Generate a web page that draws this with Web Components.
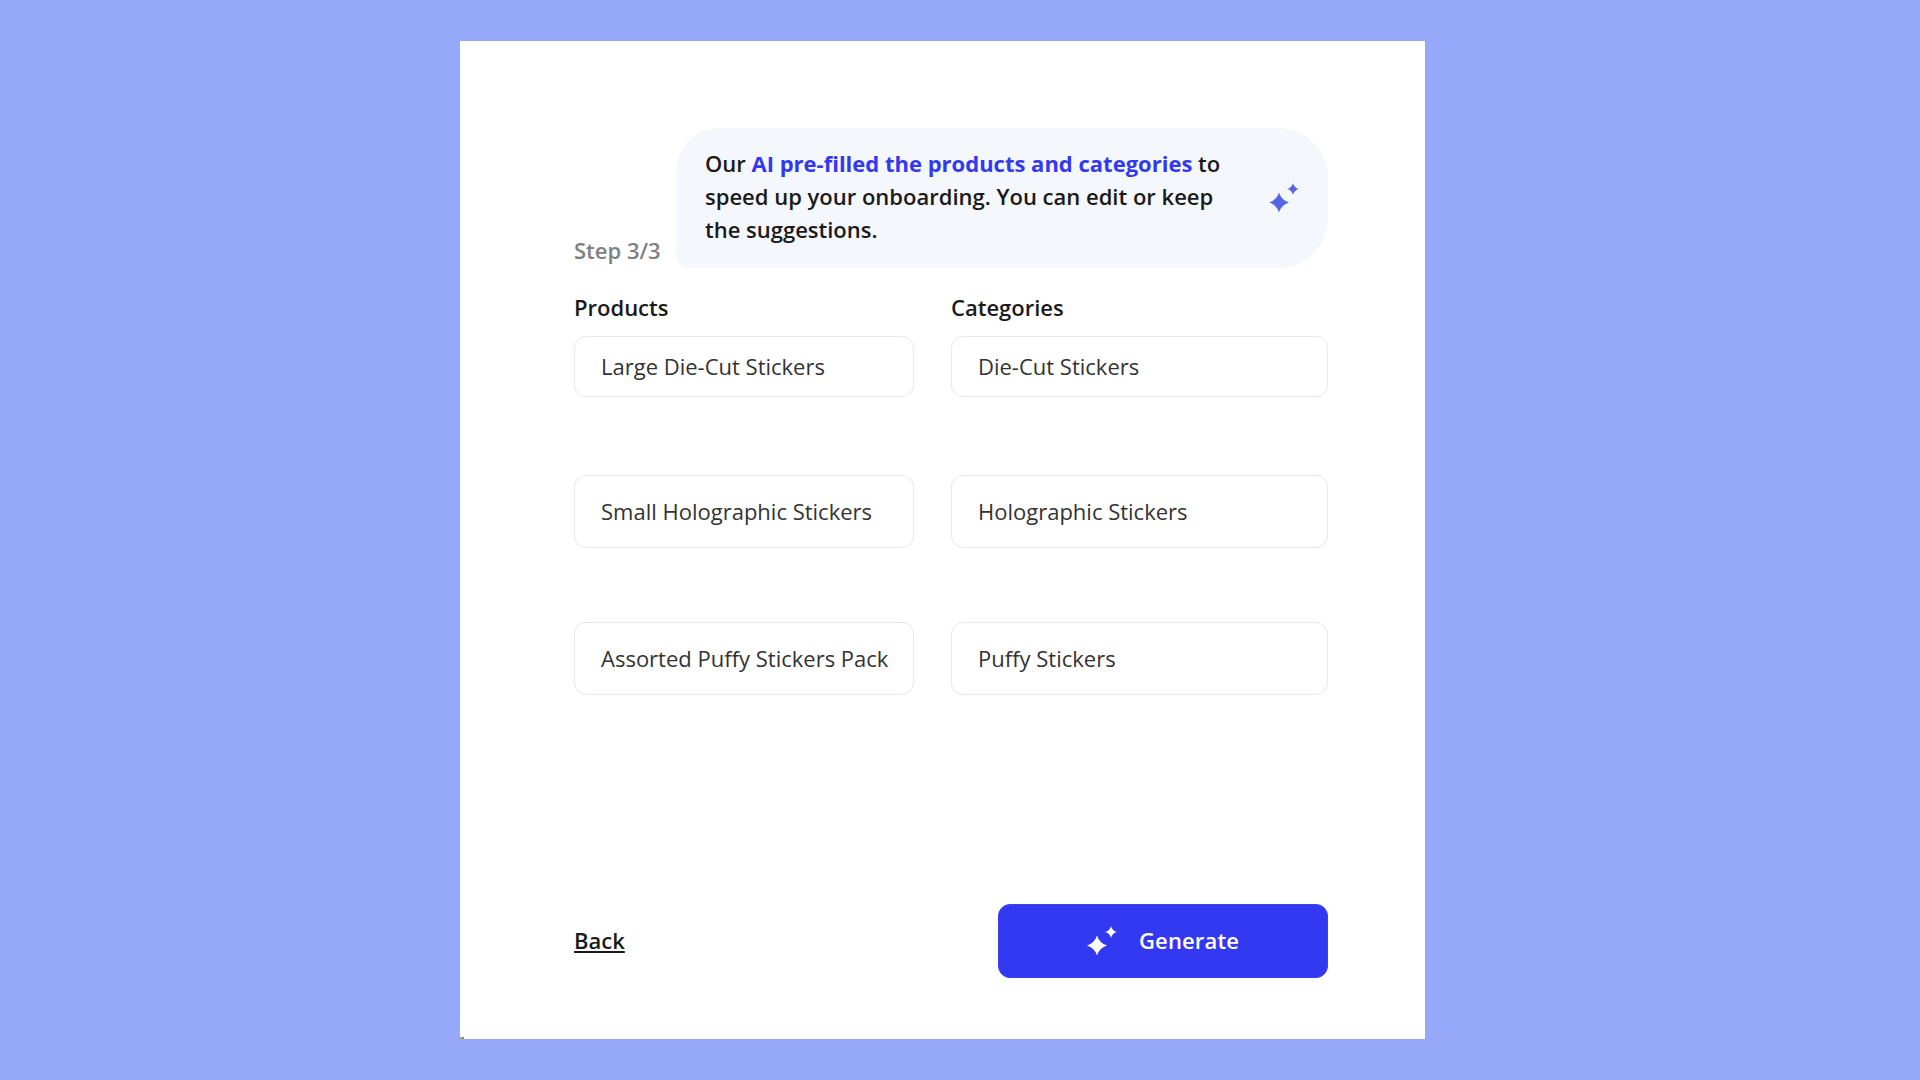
<!DOCTYPE html>
<html>
<head>
<meta charset="utf-8">
<title>Onboarding</title>
<style>
  html, body { margin: 0; height: 100%; }
  body {
    background: #96a8fa;
    font-family: "Open Sans", "Liberation Sans", sans-serif;
    font-size: 22px;
    line-height: 33px;
    color: #111;
  }
</style>
</head>
<body>
<onboard-card>
  <onboard-head step="Step 3/3">
    Our <b>AI pre-filled the products and categories</b> to speed up your onboarding. You can edit or keep the suggestions.
  </onboard-head>
  <field-grid>
    <field-label>Products</field-label>
    <field-label>Categories</field-label>
    <text-field height="61">Large Die-Cut Stickers</text-field>
    <text-field height="61">Die-Cut Stickers</text-field>
    <text-field>Small Holographic Stickers</text-field>
    <text-field>Holographic Stickers</text-field>
    <text-field>Assorted Puffy Stickers Pack</text-field>
    <text-field>Puffy Stickers</text-field>
  </field-grid>
  <onboard-foot></onboard-foot>
</onboard-card>

<script>
// four point star pair, same shape in the bubble and on the button
class SparkIcon extends HTMLElement {
  constructor() {
    super();
    const color = this.getAttribute("color") || "currentColor";
    this.attachShadow({mode: "open"}).innerHTML = `
      <style>
        :host { display: block; width: 32px; height: 32px; flex: none; }
        svg { display: block; }
      </style>
      <svg width="32" height="32" viewBox="0 0 32 32" fill="${color}">
        <path d="M10 12.5 Q12.4 20.1 20 22.5 Q12.4 24.9 10 32.5 Q7.6 24.9 0 22.5 Q7.6 20.1 10 12.5Z"/>
        <path d="M24 3.2 Q25.3 7.7 29.8 9 Q25.3 10.3 24 14.8 Q22.7 10.3 18.2 9 Q22.7 7.7 24 3.2Z"/>
      </svg>`;
  }
}
customElements.define("spark-icon", SparkIcon);

class OnboardCard extends HTMLElement {
  constructor() {
    super();
    this.attachShadow({mode: "open"}).innerHTML = `
      <style>
        :host {
          display: flex;
          flex-direction: column;
          box-sizing: border-box;
          width: 965px;
          height: 998px;
          position: relative;
          top: 41px;
          left: 460px;
          padding: 87px 97px 61px 114px;
          background: #fff;
        }
        /* stray pixels in the corner of the shot */
        :host::after {
          content: "";
          position: absolute;
          left: 0;
          bottom: 0;
          width: 4px;
          height: 2px;
          background: linear-gradient(90deg, #e8a040, #6fb060, #5a80e0);
        }
      </style>
      <slot></slot>`;
  }
}
customElements.define("onboard-card", OnboardCard);

class OnboardHead extends HTMLElement {
  constructor() {
    super();
    const step = this.getAttribute("step");
    this.attachShadow({mode: "open"}).innerHTML = `
      <style>
        :host { display: flex; align-items: flex-end; }
        .step { width: 102px; flex: none; color: #808080; font-weight: 600; margin-bottom: 1px; }
        .bubble {
          flex: 1;
          display: flex;
          align-items: center;
          height: 140px;
          box-sizing: border-box;
          padding: 0 27px 4px 29px;
          background: #f4f7fc;
          border-radius: 44px 50px 50px 12px;
          font-weight: 600;
          color: #1a1a1a;
        }
        .text { width: 520px; }
        spark-icon { margin-left: auto; }
        ::slotted(b) { color: #3339f1; font-weight: 700; }
      </style>
      <div class="step">${step}</div>
      <div class="bubble">
        <div class="text"><slot></slot></div>
        <spark-icon color="#5566e0"></spark-icon>
      </div>`;
  }
}
customElements.define("onboard-head", OnboardHead);

class FieldGrid extends HTMLElement {
  constructor() {
    super();
    this.attachShadow({mode: "open"}).innerHTML = `
      <style>
        :host {
          display: grid;
          grid-template-columns: 340px 377px;
          grid-template-rows: 45px 139px 147px 73px;
          column-gap: 37px;
          margin-top: 23px;
        }
      </style>
      <slot></slot>`;
  }
}
customElements.define("field-grid", FieldGrid);

class FieldLabel extends HTMLElement {
  constructor() {
    super();
    this.attachShadow({mode: "open"}).innerHTML = `
      <style>:host { display: block; font-weight: 600; color: #1a1a1a; }</style>
      <slot></slot>`;
  }
}
customElements.define("field-label", FieldLabel);

class TextField extends HTMLElement {
  constructor() {
    super();
    const h = this.getAttribute("height") || 73;
    this.attachShadow({mode: "open"}).innerHTML = `
      <style>
        :host {
          display: flex;
          align-items: center;
          align-self: start;
          box-sizing: border-box;
          height: ${h}px;
          padding: 0 26px 1px;
          border: 1.5px solid #e8e8e8;
          border-radius: 12px;
          background: #fff;
          color: #333;
          white-space: nowrap;
        }
      </style>
      <slot></slot>`;
  }
}
customElements.define("text-field", TextField);

class OnboardFoot extends HTMLElement {
  constructor() {
    super();
    this.attachShadow({mode: "open"}).innerHTML = `
      <style>
        :host { display: flex; justify-content: space-between; align-items: center; margin-top: auto; }
        a { color: #1a1a1a; font-weight: 600; text-decoration: underline; margin-top: -2px; }
        button {
          display: flex;
          align-items: center;
          justify-content: center;
          gap: 20px;
          width: 330px;
          height: 74px;
          border: 1px solid #3a40f5;
          border-radius: 12px;
          background: #3339f1;
          color: #fff;
          font: 600 22px/33px "Open Sans", "Liberation Sans", sans-serif;
          letter-spacing: .15px;
        }
        span { margin-top: -1px; }
        spark-icon { margin-top: -5px; }
      </style>
      <a href="#">Back</a>
      <button><spark-icon color="#fff"></spark-icon><span>Generate</span></button>`;
  }
}
customElements.define("onboard-foot", OnboardFoot);
</script>
</body>
</html>
